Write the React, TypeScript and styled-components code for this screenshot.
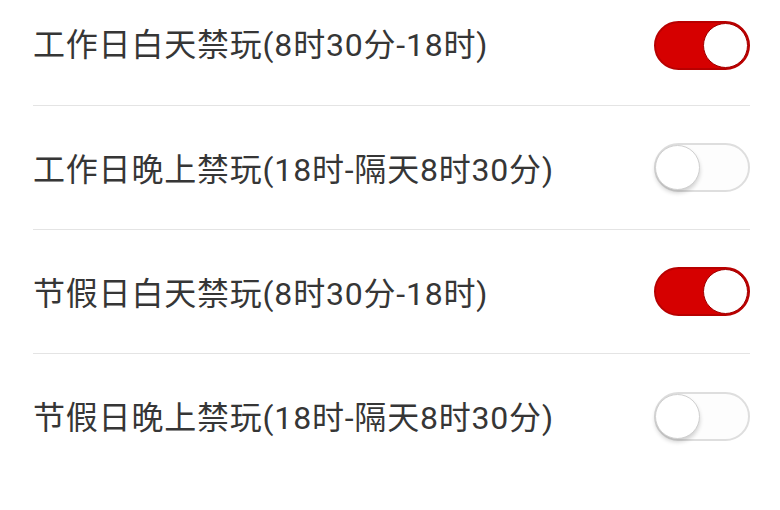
import React, { useState } from 'react';
import styled, { createGlobalStyle } from 'styled-components';

const GlobalStyle = createGlobalStyle`
  body {
    margin: 0;
    background: #ffffff;
    font-family: Roboto, "Noto Sans CJK SC", sans-serif;
  }
`

const List = styled.div`
  width: 780px;
  height: 510px;
  overflow: hidden;
  background: #fff;
`

const Row = styled.div`
  height: 124px;
  margin: 0 30px 0 33px;
  display: flex;
  align-items: center;
  justify-content: space-between;
  border-bottom: 1px solid #e4e4e4;
  box-sizing: border-box;

  &:first-child {
    height: 106px;
    align-items: flex-start;
    padding-top: 21px;
  }
  &:last-child {
    border-bottom: none;
  }
`

const Label = styled.span`
  font-size: 32px;
  color: #363636;
  letter-spacing: 0.8px;
  margin-top: -2px;
`

const Track = styled.button<{ $on: boolean }>`
  position: relative;
  width: 96px;
  height: 49px;
  padding: 0;
  border-radius: 25px;
  box-sizing: border-box;
  cursor: pointer;
  border: 2px solid ${p => (p.$on ? '#b80000' : '#dedede')};
  background: ${p => (p.$on ? '#d60000' : '#fdfdfd')};
  flex-shrink: 0;
`

const Knob = styled.span<{ $on: boolean }>`
  position: absolute;
  top: 0;
  left: ${p => (p.$on ? '47px' : '-1px')};
  width: 45px;
  height: 45px;
  border-radius: 50%;
  background: #fff;
  box-sizing: border-box;
  border: 1px solid ${p => (p.$on ? '#a00000' : '#d0d0d0')};
  box-shadow: ${p => (p.$on ? 'none' : '0 3px 4px rgba(0,0,0,0.18)')};
`

const items = [
  { text: '工作日白天禁玩(8时30分-18时)', on: true },
  { text: '工作日晚上禁玩(18时-隔天8时30分)', on: false },
  { text: '节假日白天禁玩(8时30分-18时)', on: true },
  { text: '节假日晚上禁玩(18时-隔天8时30分)', on: false },
]

export default function App() {
  const [state, setState] = useState(items.map(i => i.on))
  return (
    <List>
      <GlobalStyle />
      {items.map((item, i) => (
        <Row key={i}>
          <Label>{item.text}</Label>
          <Track
            $on={state[i]}
            onClick={() => setState(s => s.map((v, j) => (j === i ? !v : v)))}
          >
            <Knob $on={state[i]} />
          </Track>
        </Row>
      ))}
    </List>
  )
}
